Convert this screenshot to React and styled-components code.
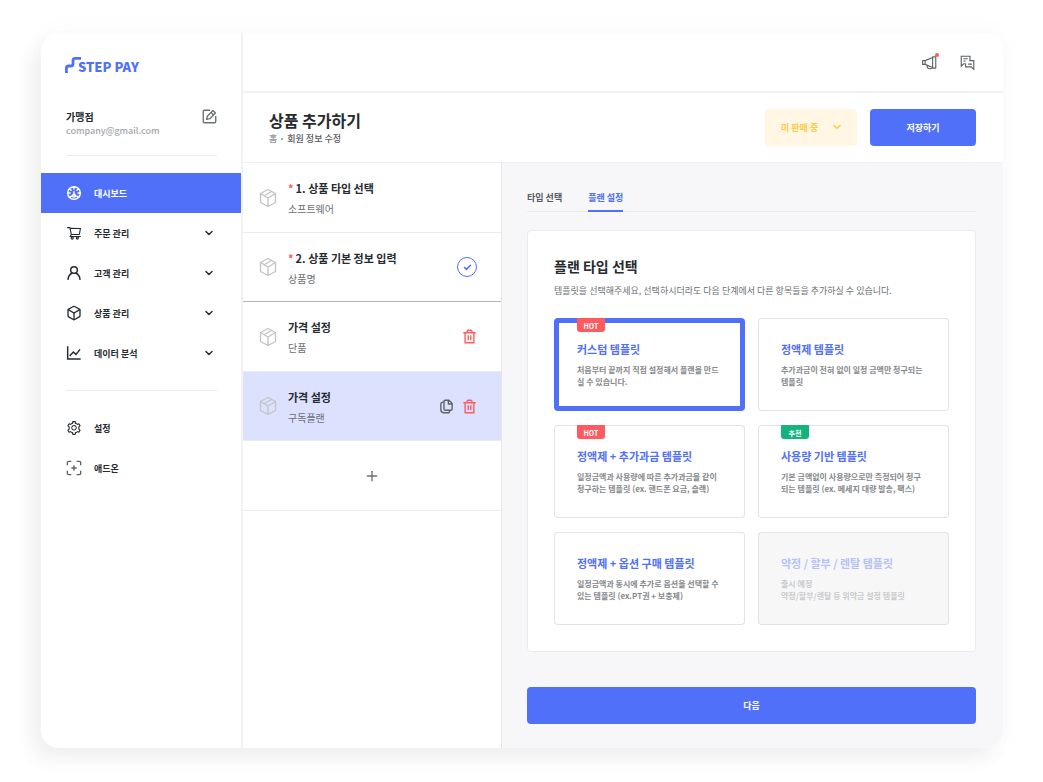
import React, { useState } from 'react'
import styled, { createGlobalStyle, css } from 'styled-components'
import { Box, ChevronDown, Check, Plus } from 'lucide-react'
import { AiOutlineShoppingCart, AiOutlineSetting } from 'react-icons/ai'

const menus = [
  { id: 'dashboard', label: '대시보드', icon: <GaugeIcon /> },
  { id: 'orders', label: '주문 관리', icon: <AiOutlineShoppingCart />, more: true },
  { id: 'customers', label: '고객 관리', icon: <UserIcon />, more: true },
  { id: 'products', label: '상품 관리', icon: <Box strokeWidth={2} />, more: true },
  { id: 'analysis', label: '데이터 분석', icon: <ChartIcon />, more: true },
]

const subMenus = [
  { id: 'settings', label: '설정', icon: <AiOutlineSetting /> },
  { id: 'addon', label: '애드온', icon: <AddonIcon /> },
]

const steps = [
  { id: 1, title: '1. 상품 타입 선택', desc: '소프트웨어', required: true },
  { id: 2, title: '2. 상품 기본 정보 입력', desc: '상품명', required: true, done: true, last: true },
  { id: 3, title: '가격 설정', desc: '단품', removable: true },
  { id: 4, title: '가격 설정', desc: '구독플랜', removable: true, copyable: true, active: true },
]

const templates = [
  { id: 'custom', title: '커스텀 템플릿', desc: '처음부터 끝까지 직접 설정해서 플랜을 만드\n실 수 있습니다.', badge: 'HOT' },
  { id: 'flat', title: '정액제 템플릿', desc: '추가과금이 전혀 없이 일정 금액만 청구되는\n템플릿' },
  { id: 'flat-extra', title: '정액제 + 추가과금 템플릿', desc: '일정금액과 사용량에 따른 추가과금을 같이\n청구하는 템플릿 (ex. 핸드폰 요금, 슬랙)', badge: 'HOT' },
  { id: 'usage', title: '사용량 기반 템플릿', desc: '기본 금액없이 사용량으로만 측정되어 청구\n되는 템플릿 (ex. 메세지 대량 발송, 팩스)', badge: '추천', green: true },
  { id: 'flat-option', title: '정액제 + 옵션 구매 템플릿', desc: '일정금액과 동시에 추가로 옵션을 선택할 수\n있는 템플릿 (ex.PT권 + 보충제)' },
  { id: 'rental', title: '약정 / 할부 / 렌탈 템플릿', desc: '출시 예정\n약정/할부/렌탈 등 위약금 설정 템플릿', disabled: true },
]

const App = () => {
  const [menu, setMenu] = useState('dashboard')
  const [tab, setTab] = useState('plan')
  const [template, setTemplate] = useState('custom')

  return (
    <>
      <GlobalStyle />
      <Page>
        <Shell>
          <Sidebar>
            <Logo href='#'>
              <LogoMark />
              STEP PAY
            </Logo>
            <Profile>
              <div>
                <ProfileName>가맹점</ProfileName>
                <ProfileMail>company@gmail.com</ProfileMail>
              </div>
              <IconButton aria-label='프로필 수정' $color='#6c7073'>
                <EditIcon />
              </IconButton>
            </Profile>
            <Divider />
            <Menu items={menus} current={menu} onSelect={setMenu} />
            <Divider />
            <Menu items={subMenus} current={menu} onSelect={setMenu} />
          </Sidebar>
          <Content>
            <TopBar>
              <IconButton aria-label='공지사항' $color='#5d6265'>
                <MegaphoneIcon />
                <Dot />
              </IconButton>
              <IconButton aria-label='채팅' $color='#5d6265'>
                <ChatIcon />
              </IconButton>
            </TopBar>
            <Header>
              <div>
                <PageTitle>상품 추가하기</PageTitle>
                <Crumbs>
                  <a href='#'>홈</a>
                  <i />
                  <span>회원 정보 수정</span>
                </Crumbs>
              </div>
              <Actions>
                <Status>
                  <select aria-label='판매 상태' defaultValue='off'>
                    <option value='off'>미 판매 중</option>
                    <option value='on'>판매 중</option>
                  </select>
                  <ChevronDown size={12} strokeWidth={3} />
                </Status>
                <PrimaryButton $width='106px'>저장하기</PrimaryButton>
              </Actions>
            </Header>
            <Body>
              <Steps>
                {steps.map((step) => (
                  <Step key={step.id} $active={step.active} $last={step.last}>
                    <PackageIcon />
                    <StepText>
                      <h3>
                        {step.required && <em>*</em>}
                        {step.title}
                      </h3>
                      <p>{step.desc}</p>
                    </StepText>
                    {step.done && (
                      <Done>
                        <Check size={9} strokeWidth={4} />
                      </Done>
                    )}
                    {step.copyable && (
                      <IconButton aria-label='복사' $color='#5d6265'>
                        <CopyIcon />
                      </IconButton>
                    )}
                    {step.removable && (
                      <IconButton aria-label='삭제' $color='#ff5a5f'>
                        <TrashIcon />
                      </IconButton>
                    )}
                  </Step>
                ))}
                <AddStep aria-label='가격 추가'>
                  <Plus size={16} strokeWidth={2} />
                </AddStep>
              </Steps>
              <Main>
                <Tabs>
                  <Tab $active={tab === 'type'} onClick={() => setTab('type')}>타입 선택</Tab>
                  <Tab $active={tab === 'plan'} onClick={() => setTab('plan')}>플랜 설정</Tab>
                </Tabs>
                <Panel>
                  <h2>플랜 타입 선택</h2>
                  <p>템플릿을 선택해주세요, 선택하시더라도 다음 단계에서 다른 항목들을 추가하실 수 있습니다.</p>
                  <Templates>
                    {templates.map((item) => (
                      <Template
                        key={item.id}
                        disabled={item.disabled}
                        $selected={template === item.id}
                        aria-pressed={template === item.id}
                        onClick={() => setTemplate(item.id)}
                      >
                        {item.badge && <Badge $green={item.green}>{item.badge}</Badge>}
                        <TemplateTitle>{item.title}</TemplateTitle>
                        <TemplateDesc>{item.desc}</TemplateDesc>
                      </Template>
                    ))}
                  </Templates>
                </Panel>
                <PrimaryButton $width='100%'>다음</PrimaryButton>
              </Main>
            </Body>
          </Content>
        </Shell>
      </Page>
    </>
  )
}

const Menu = ({ items, current, onSelect }) => (
  <nav>
    {items.map((item) => (
      <MenuItem key={item.id} $active={item.id === current} onClick={() => onSelect(item.id)}>
        {item.icon}
        <span>{item.label}</span>
        {item.more && <ChevronDown className='more' strokeWidth={3} />}
      </MenuItem>
    ))}
  </nav>
)

function LogoMark() {
  return (
    <svg width='16' height='16' viewBox='0 0 16 16' fill='none' stroke='currentColor' strokeWidth='2.8' strokeLinejoin='round'>
      <path d='M1.4 16V11q0-2 2-2H6q2 0 2-2V3.4q0-2 2-2h6' />
    </svg>
  )
}

function GaugeIcon() {
  return (
    <svg viewBox='0 0 24 24' fill='none' stroke='currentColor' strokeWidth='2.2' strokeLinecap='round'>
      <circle cx='12' cy='12' r='9.500' />
      <path d='M12 3v3M3.500 12H6M18 12h2.500M6 6.500l1.500 1.500M18 6.500l-1.500 1.500M12 10v5M5 18.500c2-1.500 3.500-2.500 5-2.500M19 18.500c-2-1.500-3.500-2.500-5-2.500' />
      <circle cx='12' cy='16' r='2' />
    </svg>
  )
}

function UserIcon() {
  return (
    <svg viewBox='0 0 24 24' fill='none' stroke='currentColor' strokeWidth='2.2' strokeLinecap='round'>
      <circle cx='12' cy='7.500' r='5' />
      <path d='M3 21.500c.5-5 3-8 6.500-9.500M21 21.500c-.5-5-3-8-6.500-9.500' />
    </svg>
  )
}

function ChartIcon() {
  return (
    <svg viewBox='0 0 24 24' fill='none' stroke='currentColor' strokeWidth='2.2'>
      <path d='M2.500 2v19H22M5.500 16.500l5.500-6 4 3.500 6-7.500' />
    </svg>
  )
}

function AddonIcon() {
  return (
    <svg viewBox='0 0 24 24' fill='none' stroke='#5d6265' strokeWidth='2'>
      <path d='M2 8V4q0-2 2-2h4M16 2h4q2 0 2 2v4M22 16v4q0 2-2 2h-4M8 22H4q-2 0-2-2v-4M12 8v8M8 12h8' />
    </svg>
  )
}

function EditIcon() {
  return (
    <svg width='15' height='15' viewBox='0 0 24 24' fill='none' stroke='currentColor' strokeWidth='2.2' strokeLinejoin='round'>
      <path d='M13 2H4Q2 2 2 4v16q0 2 2 2h16q2 0 2-2v-9' />
      <path d='M7.500 16.500l1-5L17.500 2.500l4 4-9 9zM14.500 5.500l4 4' />
    </svg>
  )
}

function MegaphoneIcon() {
  return (
    <svg width='15' height='15' viewBox='0 0 24 24' fill='none' stroke='currentColor' strokeWidth='1.8' strokeLinejoin='round'>
      <path d='M1 9h4v6H1zM5 9l12-5v16L5 15M17 3h5v18h-5zM8 16.500q0 5.500 4 5.500t4-3' />
    </svg>
  )
}

function ChatIcon() {
  return (
    <svg width='15' height='15' viewBox='0 0 24 24' fill='none' stroke='currentColor' strokeWidth='1.8'>
      <path d='M9 14H6l-4 4V2h14v7M5.500 6h7M5.500 9.500H9' />
      <path d='M15 9h7v14l-4-4H9v-5M13 14.500h6' />
    </svg>
  )
}

function PackageIcon() {
  return (
    <svg width='18' height='20' viewBox='0 0 18 20' fill='none' stroke='#c4c5c7' strokeWidth='1.4' strokeLinejoin='round'>
      <path d='M9 1.500l7.500 4v9L9 18.500l-7.500-4v-9zM1.500 5.500L9 10l7.500-4.500M9 10v8.500M5.500 7.500l7-4' />
    </svg>
  )
}

function CopyIcon() {
  return (
    <svg width='15' height='15' viewBox='0 0 24 24' fill='none' stroke='currentColor' strokeWidth='2.2' strokeLinejoin='round'>
      <path d='M10 2h6l5 5v9q0 2-2 2h-9q-2 0-2-2V4q0-2 2-2zM15 2v6h6' />
      <path d='M8 5H6Q3 5.500 3 8v9q0 5 5 5h6q3 0 3-3' />
    </svg>
  )
}

function TrashIcon() {
  return (
    <svg width='15' height='15' viewBox='0 0 24 24' fill='none' stroke='currentColor' strokeWidth='2.2'>
      <path d='M2 6h20M8 6V4q0-2 2-2h4q2 0 2 2v2M5 6v16h14V6M10 10v8M14 10v8' />
    </svg>
  )
}

const GlobalStyle = createGlobalStyle`
  * {
    box-sizing: border-box;
  }
  body {
    margin: 0;
    background: #fff;
    color: #272b30;
    font-family: 'Noto Sans CJK KR', sans-serif;
    font-size: 9px;
  }
  h1, h2, h3, p {
    margin: 0;
  }
  button, select {
    margin: 0;
    padding: 0;
    border: 0;
    background: none;
    color: inherit;
    font: inherit;
    cursor: pointer;
  }
  a {
    color: inherit;
    text-decoration: none;
  }
  svg {
    display: block;
    flex-shrink: 0;
  }
`

const Page = styled.div`
  display: flex;
  min-height: 100vh;
  padding: 33px 40px 34px 41px;
`

const Shell = styled.div`
  flex: 1;
  display: flex;
  border-radius: 18px;
  overflow: hidden;
  background: #fff;
  box-shadow: -10px 12px 20px rgba(0, 0, 0, 0.05), 0 0 30px rgba(0, 0, 0, 0.03);
`

const Sidebar = styled.aside`
  width: 202px;
  flex-shrink: 0;
  padding-top: 24px;
  border-right: 2px solid #f2f2f4;
`

const Logo = styled.a`
  display: flex;
  align-items: center;
  height: 20px;
  margin-left: 24px;
  color: #5170fa;
  font-size: 13px;
  font-weight: 900;
  line-height: 20px;
  svg {
    align-self: flex-start;
    margin-right: -3px;
  }
`

const Profile = styled.div`
  display: flex;
  justify-content: space-between;
  align-items: flex-start;
  margin: 32px 24px 0 25px;
`

const ProfileName = styled.div`
  font-size: 10px;
  font-weight: 700;
  line-height: 16px;
`

const ProfileMail = styled.div`
  color: #a5a7aa;
  font-weight: 500;
  line-height: 12px;
`

const IconButton = styled.button`
  position: relative;
  color: ${(props) => props.$color};
`

const Divider = styled.hr`
  height: 1px;
  margin: 17px 24px 17px 25px;
  border: 0;
  background: #ebecee;
  ${Profile} + & {
    margin-top: 18px;
  }
`

const MenuItem = styled.button`
  display: flex;
  align-items: center;
  gap: 12px;
  width: 100%;
  height: 40px;
  padding: 0 26px 0 25px;
  background: ${(props) => (props.$active ? '#5170fa' : 'transparent')};
  color: ${(props) => (props.$active ? '#fff' : '#272b30')};
  font-weight: 700;
  text-align: left;
  svg {
    width: 16px;
    height: 16px;
  }
  span {
    flex: 1;
  }
  .more {
    width: 12px;
    height: 12px;
  }
`

const Content = styled.div`
  flex: 1;
  min-width: 0;
  display: flex;
  flex-direction: column;
`

const TopBar = styled.div`
  display: flex;
  justify-content: flex-end;
  align-items: center;
  gap: 23px;
  height: 60px;
  padding-right: 28px;
  border-bottom: 2px solid #f2f2f4;
`

const Dot = styled.span`
  position: absolute;
  top: -2px;
  right: -2px;
  width: 4px;
  height: 4px;
  border-radius: 50%;
  background: #ff5a5f;
`

const Header = styled.header`
  display: flex;
  justify-content: space-between;
  align-items: center;
  height: 70px;
  padding: 0 27px 0 26px;
  border-bottom: 1px solid #f0f0f2;
`

const PageTitle = styled.h1`
  font-size: 16px;
  font-weight: 700;
  line-height: 22px;
`

const Crumbs = styled.div`
  display: flex;
  align-items: center;
  color: #55595d;
  font-weight: 500;
  line-height: 16px;
  a {
    color: #8f9295;
  }
  i {
    width: 2px;
    height: 2px;
    margin: 0 4px;
    border-radius: 50%;
    background: #8f9295;
  }
`

const Actions = styled.div`
  display: flex;
  gap: 13px;
`

const Status = styled.div`
  position: relative;
  color: #ffc94a;
  select {
    width: 92px;
    height: 37px;
    padding: 0 30px 0 16px;
    border-radius: 4px;
    background: #fff7e3;
    font-weight: 700;
    appearance: none;
  }
  svg {
    position: absolute;
    top: 12px;
    right: 14px;
    pointer-events: none;
  }
`

const PrimaryButton = styled.button`
  width: ${(props) => props.$width};
  height: 37px;
  border-radius: 4px;
  background: #5170fa;
  color: #fff;
  font-weight: 700;
`

const Body = styled.div`
  flex: 1;
  display: flex;
`

const Steps = styled.div`
  width: 259px;
  flex-shrink: 0;
  border-right: 1px solid #e6e7e9;
`

const row = css`
  display: flex;
  align-items: center;
  width: 100%;
  border-bottom: 1px solid #ebecee;
`

const Step = styled.div`
  ${row}
  gap: 8px;
  height: ${(props) => (props.$last || props.$active ? 69 : 70)}px;
  padding: 0 24px 0 16px;
  border-bottom-color: ${(props) => (props.$last ? '#b4b5b7' : '#ebecee')};
  background: ${(props) => (props.$active ? '#dce1fe' : 'transparent')};
`

const StepText = styled.div`
  flex: 1;
  padding: 2px 0 0 3px;
  h3 {
    font-size: 11px;
    font-weight: 700;
    line-height: 20px;
  }
  em {
    margin-right: 2px;
    color: #ff5a5f;
    font-style: normal;
  }
  p {
    color: #6c7073;
    font-size: 10px;
    line-height: 21px;
  }
`

const Done = styled.span`
  display: flex;
  align-items: center;
  justify-content: center;
  width: 20px;
  height: 20px;
  border: 1px solid #5170fa;
  border-radius: 50%;
  color: #5170fa;
`

const AddStep = styled.button`
  ${row}
  justify-content: center;
  height: 70px;
  color: #6c7073;
`

const Main = styled.main`
  flex: 1;
  min-width: 0;
  padding: 26px 27px 24px 25px;
  background: #f7f7fa;
`

const Tabs = styled.div`
  display: flex;
  gap: 26px;
  height: 23px;
  margin-bottom: 18px;
  box-shadow: inset 0 -1px #ebecee;
`

const Tab = styled.button`
  height: 23px;
  padding-bottom: 4px;
  border-bottom: 2px solid ${(props) => (props.$active ? '#5170fa' : 'transparent')};
  color: ${(props) => (props.$active ? '#5170fa' : '#55595d')};
  font-weight: 700;
  line-height: 17px;
`

const Panel = styled.section`
  margin-bottom: 35px;
  padding: 25px 26px 26px;
  border: 1px solid #ebecee;
  border-radius: 4px;
  background: #fff;
  h2 {
    font-size: 14px;
    font-weight: 700;
    line-height: 20px;
  }
  p {
    margin: 8px 0 20px;
    color: #6c7073;
    line-height: 14px;
  }
`

const Templates = styled.div`
  display: grid;
  grid-template-columns: 1fr 1fr;
  gap: 14px 13px;
`

const Template = styled.button`
  position: relative;
  display: flex;
  flex-direction: column;
  gap: 7px;
  height: 93px;
  padding: 23px 12px 0 23px;
  border-radius: 4px;
  box-shadow: inset 0 0 0 ${(props) => (props.$selected ? '5px #5170fa' : '1px #e2e3e5')};
  text-align: left;
  &:disabled {
    background: #f7f7f8;
    cursor: default;
    span {
      opacity: 0.4;
    }
  }
`

const TemplateTitle = styled.span`
  color: #5170fa;
  font-size: 11px;
  font-weight: 700;
  line-height: 16px;
`

const TemplateDesc = styled.span`
  color: #85888b;
  font-size: 8px;
  font-weight: 700;
  line-height: 12px;
  white-space: pre-line;
`

const Badge = styled.span`
  position: absolute;
  top: 0;
  left: 23px;
  width: 28px;
  height: 14px;
  border-radius: 0 0 3px 3px;
  background: ${(props) => (props.$green ? '#14b37d' : '#ff5a5f')};
  color: #fff;
  font-size: 7px;
  font-weight: 700;
  line-height: 16px;
  text-align: center;
`

export default App
